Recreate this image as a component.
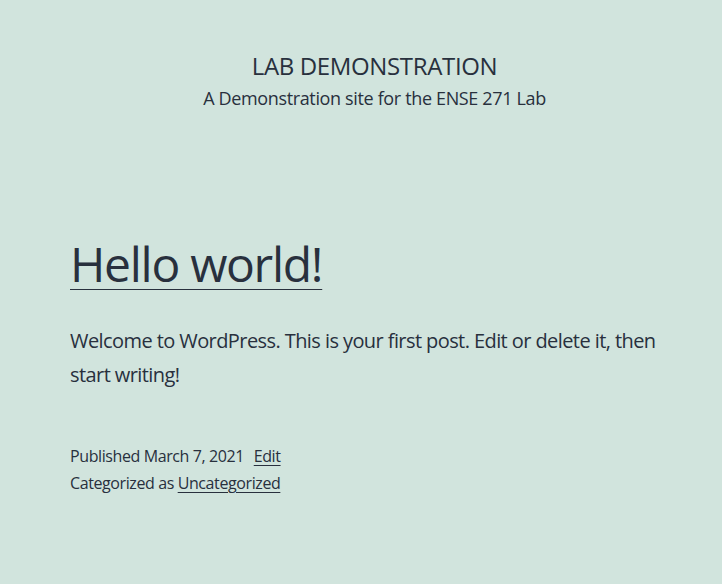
export default function App() {
  return (
    <div
      className="min-h-[584px] bg-[#d1e4dd] text-[#28303d] tracking-[-0.022em]"
      style={{ fontFamily: '"Open Sans", sans-serif' }}
    >
      <header className="pt-[48px] pl-[27px] text-center">
        <p className="text-[24px] leading-[36px]">LAB DEMONSTRATION</p>
        <p className="text-[18px] leading-[28px]">A Demonstration site for the ENSE 271 Lab</p>
      </header>

      <main className="pl-[70px] pr-[40px] pt-[121px]">
        <h1 className="text-[48px] leading-[62px] tracking-[-0.027em]">
          <a href="#" className="underline decoration-1 underline-offset-[7px]">
            Hello world!
          </a>
        </h1>
        <div className="mt-[29px] text-[20px] leading-[34px] tracking-[-0.029em]">
          <p>
            Welcome to WordPress. This is your first post. Edit or delete it, then start writing!
          </p>
        </div>
        <footer className="mt-[51px] text-[16px] leading-[27px] tracking-[-0.025em]">
          <div>
            Published March 7, 2021{" "}
            <a href="#" className="ml-[6px] underline underline-offset-[3px]">
              Edit
            </a>
          </div>
          <div>
            Categorized as{" "}
            <a href="#" className="underline underline-offset-[3px]">
              Uncategorized
            </a>
          </div>
        </footer>
      </main>
    </div>
  );
}
